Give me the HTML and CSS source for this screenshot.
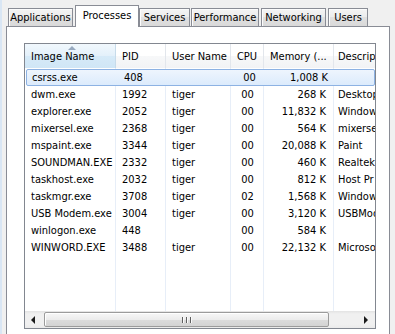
FILE: index.html
```html
<!DOCTYPE html>
<html lang="en">
<head>
<meta charset="UTF-8" />
<title>Windows Task Manager - Processes</title>
<link rel="stylesheet" href="styles.css">
</head>
<body>

	<div class="tabs">
		<div class="tab tab-app">Applications</div>
		<div class="tab tab-on tab-proc">Processes</div>
		<div class="tab tab-svc">Services</div>
		<div class="tab tab-perf">Performance</div>
		<div class="tab tab-net">Networking</div>
		<div class="tab tab-users">Users</div>
	</div>

	<div class="panel">
		<div class="list">
			<div class="head">
				<div class="hcell sorted"><span class="sort"></span>Image Name</div>
				<div class="hcell">PID</div>
				<div class="hcell">User Name</div>
				<div class="hcell center">CPU</div>
				<div class="hcell">Memory (...</div>
				<div class="hcell">Descrip</div>
			</div>
			<div class="rows">
				<div class="row sel"><span>csrss.exe</span><span>408</span><span></span><span>00</span><span>1,008 K</span><span></span></div>
				<div class="row"><span>dwm.exe</span><span>1992</span><span>tiger</span><span>00</span><span>268 K</span><span>Desktop</span></div>
				<div class="row"><span>explorer.exe</span><span>2052</span><span>tiger</span><span>00</span><span>11,832 K</span><span>Window</span></div>
				<div class="row"><span>mixersel.exe</span><span>2368</span><span>tiger</span><span>00</span><span>564 K</span><span>mixerse</span></div>
				<div class="row"><span>mspaint.exe</span><span>3344</span><span>tiger</span><span>00</span><span>20,088 K</span><span>Paint</span></div>
				<div class="row"><span>SOUNDMAN.EXE</span><span>2332</span><span>tiger</span><span>00</span><span>460 K</span><span>Realtek</span></div>
				<div class="row"><span>taskhost.exe</span><span>2032</span><span>tiger</span><span>00</span><span>812 K</span><span>Host Pr</span></div>
				<div class="row"><span>taskmgr.exe</span><span>3708</span><span>tiger</span><span>02</span><span>1,568 K</span><span>Window</span></div>
				<div class="row"><span>USB Modem.exe</span><span>3004</span><span>tiger</span><span>00</span><span>3,120 K</span><span>USBMod</span></div>
				<div class="row"><span>winlogon.exe</span><span>448</span><span></span><span>00</span><span>584 K</span><span></span></div>
				<div class="row"><span>WINWORD.EXE</span><span>3488</span><span>tiger</span><span>00</span><span>22,132 K</span><span>Microso</span></div>
			</div>
			<div class="hscroll">
				<div class="sbtn">
					<svg width="5" height="8" viewBox="0 0 5 8"><polygon points="4,0 4,8 0,4" fill="#1a1a1a"/></svg>
				</div>
				<div class="thumb">
					<div class="grip"><i></i><i></i><i></i></div>
				</div>
				<div class="track"></div>
				<div class="sbtn">
					<svg width="5" height="8" viewBox="0 0 5 8"><polygon points="0,0 0,8 4,4" fill="#1a1a1a"/></svg>
				</div>
			</div>
		</div>
	</div>

</body>
</html>
```

FILE: styles.css
```css
html, body {
	margin: 0;
	padding: 0;
}
body {
	width: 395px;
	height: 334px;
	overflow: hidden;
	background: linear-gradient(to right, #d9e6f4 2px, #f0f0f0 2px);
	font-family: "DejaVu Sans Condensed", "Liberation Sans", Arial, sans-serif;
	font-stretch: condensed;
	font-size: 11px;
	color: #000;
}

/* tabs */
.tabs {
	display: flex;
	align-items: flex-end;
	height: 26px;
	padding-left: 8px;
}
.tab {
	box-sizing: border-box;
	height: 18px;
	line-height: 17px;
	text-align: center;
	border: 1px solid #898c95;
	border-bottom: none;
	background: linear-gradient(#f4f4f4, #ececec 45%, #e0e0e0 50%, #d9d9d9);
	box-shadow: inset 1px 1px 0 #fcfcfc;
	white-space: nowrap;
}
.tab-on {
	position: relative;
	z-index: 1;
	height: 22px;
	margin-bottom: -1px;
	line-height: 20px;
	background: #fff;
	box-shadow: none;
}
.tab-app { width: 65px; }
.tab-proc { width: 64px; margin-left: 2px; }
.tab-svc { width: 51px; }
.tab-perf { width: 68px; margin-left: 1px; }
.tab-net { width: 65px; margin-left: 2px; }
.tab-users { width: 40px; margin-left: 2px; }

/* tab page */
.panel {
	box-sizing: border-box;
	width: 384px;
	height: 308px;
	margin-left: 6px;
	padding: 16px 0 0 17px;
	border: 1px solid #898c95;
	border-bottom: none;
	background: #fff;
}
.list {
	box-sizing: border-box;
	width: 352px;
	height: 286px;
	border: 1px solid #828790;
	display: flex;
	flex-direction: column;
	overflow: hidden;
}

/* header */
.head {
	flex: none;
	display: grid;
	grid-template-columns: 91px 50px 65px 33px 70px 41px;
	height: 24px;
}
.hcell {
	position: relative;
	box-sizing: border-box;
	padding: 4px 0 0 6px;
	line-height: 18px;
	border-right: 1px solid #e2e6ec;
	background: linear-gradient(#fff, #fff 50%, #f7f8f9 51%, #f2f3f5);
	white-space: nowrap;
	overflow: hidden;
}
.hcell:last-child {
	padding-left: 4px;
	border-right: none;
}
.hcell.center {
	padding-left: 0;
	text-align: center;
}
.hcell.sorted {
	background: linear-gradient(#f1f8fd, #e3f0fa 50%, #d6eaf8 51%, #d0e6f6);
	border-right-color: #c7dbea;
}
.sort {
	position: absolute;
	top: 2px;
	left: 43px;
	width: 0;
	height: 0;
	border-left: 4px solid transparent;
	border-right: 4px solid transparent;
	border-bottom: 4px solid #97a9bf;
}

/* rows */
.rows {
	flex: 1;
	padding-top: 1px;
	background: linear-gradient(to right,
		transparent 90px, #e7eef8 90px, #e7eef8 91px,
		transparent 91px, transparent 140px, #e7eef8 140px, #e7eef8 141px,
		transparent 141px, transparent 205px, #e7eef8 205px, #e7eef8 206px,
		transparent 206px, transparent 238px, #e7eef8 238px, #e7eef8 239px,
		transparent 239px, transparent 308px, #e7eef8 308px, #e7eef8 309px,
		transparent 309px);
}
.row {
	display: grid;
	grid-template-columns: 91px 50px 65px 33px 70px 41px;
	height: 17px;
	line-height: 17px;
}
.row span {
	box-sizing: border-box;
	padding-left: 6px;
	white-space: nowrap;
	overflow: hidden;
}
.row span:nth-child(4) {
	padding-left: 0;
	text-align: center;
}
.row span:nth-child(5) {
	padding: 0 8px 0 0;
	text-align: right;
}
.row span:nth-child(6) {
	padding-left: 4px;
}
.row.sel {
	box-sizing: border-box;
	margin-left: 1px;
	line-height: 15px;
	border: 1px solid #8db2e3;
	border-radius: 2px;
	background: linear-gradient(#eef5fd, #dcebfc);
}
.row.sel span:first-child {
	padding-left: 5px;
}

/* horizontal scrollbar */
.hscroll {
	flex: none;
	display: flex;
	height: 17px;
	background: linear-gradient(#e3e3e3, #f0f0f0 3px, #f0f0f0 13px, #eaeaea);
}
.sbtn {
	width: 17px;
	display: flex;
	align-items: center;
	justify-content: center;
}
.thumb {
	box-sizing: border-box;
	width: 285px;
	margin: 1px 0 1px 2px;
	border: 1px solid #9b9b9b;
	border-radius: 2px;
	background: linear-gradient(#f7f7f7, #ececec 50%, #dcdcdc 51%, #d3d3d3);
	box-shadow: inset 1px 1px 0 #fff;
	display: flex;
	align-items: center;
	justify-content: center;
}
.grip {
	display: flex;
	gap: 2px;
}
.grip i {
	width: 1px;
	height: 6px;
	background: #5f5f5f;
	border-right: 1px solid #fafafa;
}
.track {
	flex: 1;
}
```
